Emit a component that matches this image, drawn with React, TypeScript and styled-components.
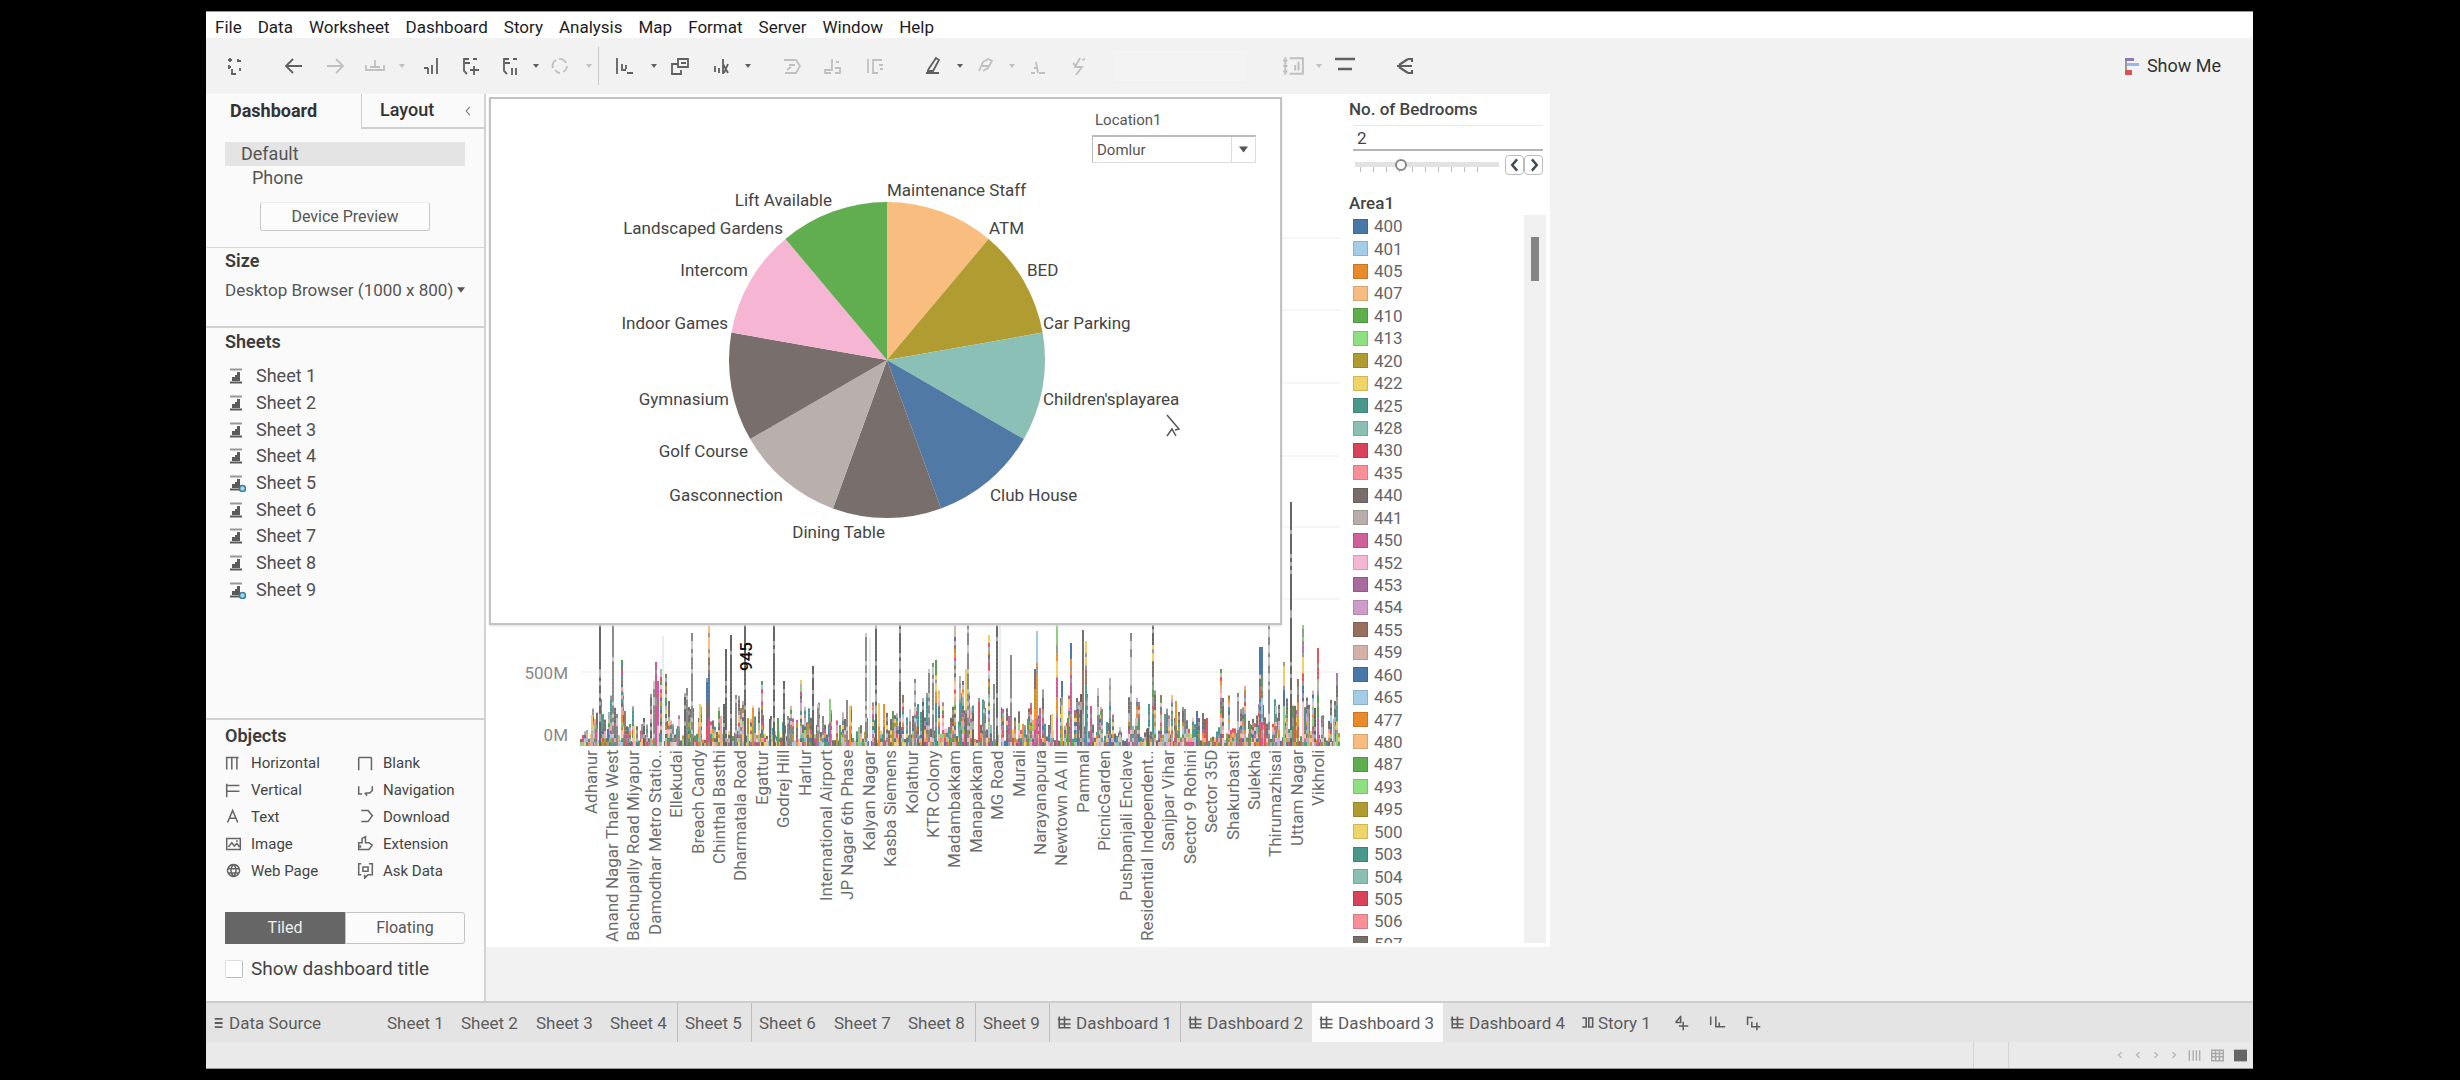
import React from "react";
import styled, { createGlobalStyle } from "styled-components";

const Global = createGlobalStyle`
  *, *::before, *::after { box-sizing: border-box; }
  body { margin: 0; background: #000; color: #333; font: 17px/22px Roboto, "Liberation Sans", sans-serif; }
  button, input, select { font: inherit; color: inherit; }
  button { border: 0; padding: 0; background: none; }
  ul { list-style: none; margin: 0; padding: 0; }
  h2 { margin: 0; }
  svg { display: block; }
`;

const Frame = styled.div`
  min-height: 100vh;
  padding: 11px 207px 11px 206px;
  display: flex;
`;
const Window = styled.div`
  flex: 1;
  min-width: 0;
  display: flex;
  flex-direction: column;
  background: #f2f2f2;
`;

/* Menu and toolbar */
const MenuBar = styled.nav`
  display: flex;
  gap: 16px;
  height: 27px;
  padding: 4px 9px 0;
  background: #fff;
  border-top: 1px solid #999;
  color: #1c1c24;
`;
const MenuItem = styled.button`
  height: 22px;
  line-height: 22px;
`;
const Toolbar = styled.div`
  display: flex;
  align-items: center;
  height: 56px;
  padding: 0 32px 0 9px;
`;
const Tool = styled.button<{ $w: number; $dim?: boolean }>`
  flex: 0 0 ${(p) => p.$w}px;
  height: 36px;
  display: flex;
  align-items: center;
  justify-content: center;
  color: ${(p) => (p.$dim ? "#c0c0c0" : "#606060")};
`;
const Gap = styled.span<{ $w: number }>`
  flex: 0 0 ${(p) => p.$w}px;
`;
const Rule = styled.span`
  flex: 0 0 1px;
  height: 38px;
  background: #c9c9c9;
`;
const FitBox = styled.select`
  width: 130px;
  height: 30px;
  border: 1px solid #f6f6f6;
  background: #f3f3f3;
  appearance: none;
`;
const ShowMe = styled.button`
  display: flex;
  align-items: center;
  gap: 8px;
  margin-left: auto;
  font-size: 18px;
`;

/* Side pane */
const Body = styled.div`
  flex: 1;
  display: flex;
  min-height: 0;
`;
const Side = styled.aside`
  flex: 0 0 280px;
  display: flex;
  flex-direction: column;
  background: #fafafa;
  border-right: 2px solid #d2d2d2;
`;
const PaneTabs = styled.div`
  display: flex;
  height: 35px;
`;
const PaneTab = styled.button<{ $on?: boolean }>`
  flex: ${(p) => (p.$on ? "0 0 155px" : "1")};
  padding: 0 0 2px ${(p) => (p.$on ? 24 : 18)}px;
  text-align: left;
  font-size: 18px;
  font-weight: ${(p) => (p.$on ? 700 : 500)};
  border: solid #cfcfcf;
  border-width: ${(p) => (p.$on ? "0" : "0 0 2px 1px")};
`;
const Collapse = styled.button`
  width: 22px;
  border-bottom: 2px solid #cfcfcf;
  color: #777;
`;
const Devices = styled.section`
  display: flex;
  flex-direction: column;
  height: 118px;
  padding: 13px 19px 0;
`;
const Device = styled.button<{ $on?: boolean }>`
  height: 24px;
  padding-left: ${(p) => (p.$on ? 16 : 27)}px;
  text-align: left;
  font-size: 18px;
  color: #555;
  background: ${(p) => (p.$on ? "#e4e4e4" : "none")};
`;
const Preview = styled.button`
  align-self: center;
  width: 170px;
  height: 29px;
  margin-top: 12px;
  font-size: 16px;
  color: #555;
  background: #fcfcfc;
  border: 1px solid #c8c8c8;
  border-top-color: #eee;
  border-radius: 3px;
`;
const SizeBox = styled.section`
  height: 79px;
  padding: 1px 19px;
  border-top: 1px solid #d8d8d8;
`;
const Heading = styled.h2`
  font-size: 18px;
  line-height: 24px;
  font-weight: 600;
  color: #3c3c3c;
`;
const SizePick = styled.button`
  display: flex;
  align-items: center;
  justify-content: space-between;
  width: 240px;
  margin-top: 5px;
  font-size: 17px;
  line-height: 24px;
  white-space: nowrap;
  color: #555;
`;
const Sheets = styled.section`
  flex: 1;
  padding: 2px 19px;
  border-top: 2px solid #d2d2d2;
`;
const SheetList = styled.ul`
  display: grid;
  grid-auto-rows: 1fr;
  height: 240px;
  margin-top: 9px;
`;
const SheetRow = styled.li`
  display: flex;
  align-items: center;
  gap: 10px;
  padding-left: 4px;
  font-size: 18px;
  color: #505050;
`;
const Objects = styled.section`
  height: 283px;
  padding: 4px 19px 0;
  border-top: 2px solid #d2d2d2;
`;
const ObjectGrid = styled.ul`
  display: grid;
  grid-template-columns: 132px 1fr;
  grid-auto-rows: 1fr;
  height: 134px;
  margin-top: 2px;
`;
const ObjectItem = styled.li`
  display: flex;
  align-items: center;
  gap: 9px;
  font-size: 15px;
  color: #444;
  svg { flex: 0 0 17px; color: #666; }
`;
const Segments = styled.div`
  display: grid;
  grid-template-columns: 1fr 1fr;
  height: 32px;
  margin-top: 28px;
`;
const Segment = styled.button<{ $on?: boolean }>`
  font-size: 16px;
  color: ${(p) => (p.$on ? "#eee" : "#555")};
  background: ${(p) => (p.$on ? "#666" : "#fbfbfb")};
  border: 1px solid ${(p) => (p.$on ? "#666" : "#c4c4c4")};
  border-radius: ${(p) => (p.$on ? "0" : "0 3px 3px 0")};
`;
const TitleCheck = styled.label`
  display: flex;
  align-items: center;
  gap: 8px;
  margin-top: 12px;
  font-size: 19px;
  line-height: 26px;
  color: #444;
  input {
    appearance: none;
    width: 18px;
    height: 18px;
    margin: 0;
    background: #fff;
    border: 1px solid #ddd;
    border-right-color: #bbb;
    border-bottom-color: #bbb;
    border-radius: 2px;
  }
`;

/* Dashboard canvas */
const Canvas = styled.main`
  position: relative;
  flex: 0 1 1064px;
  align-self: flex-start;
  display: grid;
  grid-template-columns: 1fr 201px;
  height: 853px;
  background: #fff;
`;
const Chart = styled.section`
  display: grid;
  grid-template-columns: 94px 1fr;
  grid-template-rows: 652px 1fr;
  min-width: 0;
`;
const YAxis = styled.div`
  display: flex;
  flex-direction: column;
  justify-content: flex-end;
  gap: 40px;
  padding-right: 12px;
  text-align: right;
  color: #888;
`;
const XAxis = styled.ul`
  grid-column: 2;
  display: grid;
  grid-template-columns: repeat(35, minmax(0, 1fr));
  width: 749px;
  padding-top: 4px;
`;
const Tick = styled.li`
  writing-mode: vertical-rl;
  transform: rotate(180deg);
  justify-self: center;
  justify-content: end;
  display: flex;
  height: 192px;
  line-height: 20px;
  white-space: nowrap;
  color: #6d6d6d;
`;
const Floating = styled.section`
  position: absolute;
  left: 3px;
  top: 3px;
  width: 793px;
  height: 528px;
  background: #fff;
  border: 2px solid #c2c2c2;
  box-shadow: 0 1px 2px #ddd;
`;
const Filter = styled.div`
  position: absolute;
  right: 24px;
  top: 10px;
  width: 164px;
  font-size: 15px;
  color: #555;
  label { display: block; padding-left: 3px; line-height: 22px; }
`;
const SelectWrap = styled.div`
  display: flex;
  height: 28px;
  margin-top: 4px;
  border: 1px solid #ddd;
  border-top: 2px solid #bbb;
  border-left-color: #bbb;
  select { flex: 1; padding: 0 4px; border: 0; background: #fff; appearance: none; }
  span { width: 24px; border-left: 1px solid #ddd; display: grid; place-items: center; }
`;
const SideCards = styled.section`
  display: flex;
  flex-direction: column;
  padding-right: 4px;
  color: #444;
`;
const CardTitle = styled.label`
  padding-top: 3px;
  font-size: 17px;
  line-height: 24px;
  font-weight: 500;
`;
const ValueBox = styled.input`
  height: 26px;
  margin: 4px 3px 0 4px;
  padding: 0 4px;
  min-width: 0;
  border: 0;
  border-top: 1px solid #e8e8e8;
  border-bottom: 2px solid #b4b4b4;
`;
const SliderRow = styled.div`
  display: flex;
  align-items: center;
  height: 22px;
  margin: 3px 3px 12px 6px;
`;
const Slider = styled.input`
  flex: 1;
  min-width: 0;
  height: 22px;
  margin: 0 6px 0 0;
  appearance: none;
  background:
    linear-gradient(#e2e2e2, #e2e2e2) 0 8px / 100% 5px no-repeat,
    repeating-linear-gradient(90deg, transparent 0 5px, #bbb 5px 6px, transparent 6px 13px) 0 13px / 135px 5px no-repeat;
  &::-webkit-slider-thumb {
    appearance: none;
    width: 12px;
    height: 12px;
    margin-top: -1px;
    background: #fff;
    border: 2px solid #888;
    border-radius: 50%;
  }
`;
const Step = styled.button`
  display: grid;
  place-items: center;
  width: 19px;
  height: 20px;
  border: 1px solid #bbb;
  border-radius: 4px;
  color: #3f4a55;
`;
const Legend = styled.div`
  display: flex;
  justify-content: space-between;
  height: 728px;
  overflow: hidden;
`;
const LegendList = styled.ul`
  display: grid;
  grid-auto-rows: 1fr;
  height: 740px;
  padding-left: 4px;
`;
const LegendItem = styled.li`
  display: flex;
  align-items: center;
  gap: 6px;
  color: #666;
`;
const Swatch = styled.span<{ $c: string }>`
  width: 15px;
  height: 15px;
  background: ${(p) => p.$c};
  border: 1px solid #0002;
`;
const ScrollTrack = styled.div`
  width: 22px;
  padding: 22px 7px;
  background: #f0f0f0;
  &::before { content: ""; display: block; height: 44px; background: #858585; }
`;

/* Bottom strips */
const TabBar = styled.nav`
  display: flex;
  height: 41px;
  background: #e4e4e4;
  border-top: 2px solid #cdcdcd;
`;
const Tab = styled.button<{ $w: number; $on?: boolean; $line?: boolean }>`
  flex: 0 0 ${(p) => p.$w}px;
  display: flex;
  align-items: center;
  gap: 4px;
  padding-left: 7px;
  white-space: nowrap;
  color: #5c5c5c;
  background: ${(p) => (p.$on ? "#fcfcfc" : "none")};
  border-right: 1px solid ${(p) => (p.$line ? "#bcbcbc" : "transparent")};
`;
const Status = styled.footer`
  display: flex;
  align-items: center;
  justify-content: flex-end;
  gap: 10px;
  height: 27px;
  padding-right: 6px;
  background: #eaeaea;
  border-bottom: 1px solid #999;
  color: #aaa;
`;
const StatusCell = styled.span`
  align-self: stretch;
  width: 36px;
  margin-right: 97px;
  border: solid #d4d4d4;
  border-width: 0 1px;
`;
const StatusOn = styled.span`
  color: #666;
`;
const Pager = styled.button`
  width: 8px;
  color: #b4b4b4;
`;

const P = ["#4e79a7", "#a0cbe8", "#f28e2b", "#ffbe7d", "#59a14f", "#8cd17d", "#b6992d", "#f1ce63", "#499894", "#86bcb6", "#e15759", "#ff9d9a", "#79706e", "#bab0ac", "#d3579a", "#fabfd2", "#b07aa1", "#d4a6c8", "#9d7660", "#d7b5a6"];
const LC = ["#4878a8", "#a3cce6", "#e98a2b", "#f8bc80", "#5eae4e", "#8fe07f", "#b09b30", "#efd468", "#48998c", "#8bbfb3", "#d9435a", "#f98f98", "#776d6b", "#b8adab", "#cf6099", "#f5b6d4", "#a86a9f", "#cd9cc8", "#98705c", "#d3b1a6"];

const Svg = ({ d, w = 20, s = 1.8, fill }: { d: string; w?: number; s?: number; fill?: boolean }) => (
  <svg width={w} height={w} viewBox="0 0 20 20" fill={fill ? "currentColor" : "none"} stroke={fill ? "none" : "currentColor"} strokeWidth={s} aria-hidden="true">
    <path d={d} />
  </svg>
);
const Caret = ({ size = 6 }: { size?: number }) => (
  <svg width={size} height={size} viewBox="0 0 6 6" fill="currentColor" aria-hidden="true"><path d="M0 1h6L3 5z" /></svg>
);

type ToolDef = [string, number, string | null, boolean?];
const TOOLS: ToolDef[] = [
  ["Start page", 40, "M5 2v4M3 4h4M13 3v3M12 5h4M4 9v4M3 11h3M7 13v5h4M15 12v3"],
  ["", 19, null],
  ["Undo", 40, "M18 10H3M9 3l-7 7 7 7"],
  ["Redo", 42, "M2 10h15M11 3l7 7-7 7", true],
  ["Save", 38, "M1 9v5h18V9M10 4v8M5 11h10", true],
  ["Save options", 16, "caret", true],
  ["New data source", 40, "M17 2v16M12 9v9M8 12v6M4 12h4"],
  ["New worksheet", 40, "M9 3H4v12l3 3M5 7h5M13 3h4M14 10v9M10 14h9"],
  ["Duplicate", 40, "M9 3H4v12l3 3M5 7h5M13 3h4M12 12v7M16 12v7"],
  ["Duplicate options", 11, "caret"],
  ["Refresh", 38, "M3 12a7 7 0 0 1 3-8M9 3a7 7 0 0 1 7 4M17 10a7 7 0 0 1-4 6M10 17a7 7 0 0 1-5-3", true],
  ["Refresh options", 19, "caret", true],
  ["", 4, "rule"],
  ["Swap", 50, "M3 2v16M8 8v7M9 14h3M13 17h6M12 9v4"],
  ["Swap options", 10, "caret"],
  ["Sort", 41, "M8 8H2v10h9v-4M8 12V3h10v8H8M11 7h5"],
  ["Labels", 43, "M3 10v6M7 12v5M11 3v15M11 8l5 9M16 8l-4 9"],
  ["Labels options", 10, "caret"],
  ["", 20, null],
  ["Group", 38, "M2 4h12l4 6-4 7H3M7 9h6M5 14l4-3", true],
  ["Pin", 44, "M9 3v11H2v3h6M12 12h5v5h-5M13 6h3", true],
  ["Fit axis", 40, "M3 3v14M8 3v14h5M8 4h9M14 9h4M15 13h3", true],
  ["", 16, null],
  ["Highlight", 44, "M3 17h13M5 14l8-12 3 2-6 11H4"],
  ["Highlight options", 10, "caret"],
  ["Annotate", 42, "M3 15l4-9 5-3 4 2-4 7-5 3M6 10h7", true],
  ["Annotate options", 10, "caret", true],
  ["Text label", 40, "M9 6l2 11M4 17h4M12 17h6M7 12h4", true],
  ["Fix", 42, "M12 2l-5 9h7l-6 8M5 7l3 3M14 4l3-1", true],
];

const SheetIcon = ({ used }: { used?: boolean }) => (
  <svg width="17" height="18" viewBox="0 0 17 18" aria-hidden="true">
    <path d="M1 2.500h12" stroke="#999" strokeWidth="2" />
    <path d="M1 15.500h12" stroke="#5a5a5a" strokeWidth="2" />
    <path d="M3 14v-4h3V8h2V5h3v9z" fill="#5a5a5a" />
    {used && <circle cx="13.500" cy="14.500" r="3" fill="#a9d3e6" stroke="#2f7f9f" strokeWidth="1.500" />}
  </svg>
);
const GridIcon = () => <Svg w={15} d="M3 2v16M10 2v16M1 6h17M3 12h15M4 17h14" s={2.2} />;

const OBJECTS: [string, string][] = [
  ["Horizontal", "M2 2v15M8 3v14M14 3v14M2 3h14"],
  ["Blank", "M2 3v15M17 3v15M2 3h15"],
  ["Vertical", "M2 2v16M2 4h15M2 11h15"],
  ["Navigation", "M2 5v9h4M10 13h5l3-3V5M9 13l3 3"],
  ["Text", "M3 17L9 3l6 14M5 12h8"],
  ["Download", "M5 3h8l5 6-5 7H5"],
  ["Image", "M2 4h16v13H2zM4 14l4-5 3 4 3-3 3 4M13 7h2"],
  ["Extension", "M2 9h4V4l4-2v7h4l4 3-4 5H2zM4 12v3"],
  ["Web Page", "M10 3a7 7 0 1 0 .1 0M4 8h13M4 13h13M10 3c-4 4-4 10 0 14M10 3c4 4 4 10 0 14"],
  ["Ask Data", "M5 2H2v13h3M14 2h4v13h-5l-4 4v-4M7 6h6v5H7z"],
];

const SLICES = ["#f9bd80", "#b09c31", "#8bc0b6", "#5079a5", "#786e6b", "#b9afac", "#786e6b", "#f6b5d3", "#60ae50"];
const PIE_LABELS: [string, number, number, ("start" | "end")?][] = [
  ["Maintenance Staff", 396, 97], ["ATM", 498, 135], ["BED", 536, 177], ["Car Parking", 552, 230],
  ["Children'splayarea", 552, 306], ["Club House", 499, 402], ["Dining Table", 394, 439, "end"],
  ["Gasconnection", 292, 402, "end"], ["Golf Course", 257, 358, "end"], ["Gymnasium", 238, 306, "end"],
  ["Indoor Games", 237, 230, "end"], ["Intercom", 257, 177, "end"], ["Landscaped Gardens", 292, 135, "end"],
  ["Lift Available", 341, 107, "end"],
];
const Pie = () => {
  const cx = 396, cy = 261, r = 158;
  const pt = (deg: number) => {
    const a = (deg * Math.PI) / 180;
    return `${cx + r * Math.sin(a)} ${cy - r * Math.cos(a)}`;
  };
  return (
    <svg width="100%" height="100%" viewBox="0 0 789 524" role="img" aria-label="Amenities">
      {SLICES.map((c, i) => (
        <path key={i} fill={c} d={`M${cx} ${cy}L${pt(i * 40)}A${r} ${r} 0 0 1 ${pt(i * 40 + 40)}Z`} />
      ))}
      {PIE_LABELS.map(([t, x, y, a]) => (
        <text key={t} x={x} y={y} textAnchor={a || "start"} fontSize="17" fill="#444">{t}</text>
      ))}
      <path d="M676 316l12 14-4 1M676 337l5-7 4 7" fill="none" stroke="#555" strokeWidth="1.5" />
    </svg>
  );
};

/* x, top and colour runs of a stacked bar, top to bottom: g grey, l light grey, x pale, m mixed, or palette indexes. */
type Bar = [number, number, string];
const BARS: Bar[] = [
  [93, 730, "l"], [106, 714, "7,13"], [110, 728, "14"], [114, 624, "g"], [122, 728, "0"], [127, 624, "l"], [131, 713, "l"], [136, 659, "m"], [139, 710, "18"],
  [144, 723, "m"], [148, 725, "7"], [156, 723, "18,3"], [158, 717, "g"], [165, 718, "g"], [168, 680, "l"], [170, 661, "14"], [172, 680, "14,14,15"], [175, 668, "m"], [177, 635, "x"],
  [180, 673, "m"], [187, 725, "l"], [192, 725, "l"], [199, 692, "g"], [201, 687, "l"], [206, 632, "l"], [214, 703, "7,13"], [221, 677, "0,12,10"],
  [223, 624, "3,3,18,0,0,12,14,14"], [235, 715, "11"], [238, 703, "g"], [240, 648, "g"], [245, 634, "g"], [250, 694, "l"], [255, 707, "l"], [259, 624, "g"], [262, 717, "6,5"],
  [267, 707, "2,6"], [276, 680, "m"], [284, 718, "g"], [288, 624, "g"], [292, 717, "4"], [298, 680, "g"], [302, 715, "l"], [305, 720, "l"], [315, 679, "m"],
  [322, 723, "6,12"], [327, 665, "g"], [332, 703, "l"], [337, 715, "l"], [344, 698, "5,14"], [354, 724, "4"], [361, 699, "l"], [364, 705, "7,2"], [373, 726, "5"],
  [380, 632, "l"], [384, 637, "x"], [390, 624, "g"], [393, 702, "7,2"], [398, 703, "2,18"], [407, 710, "4,6"], [414, 624, "g"], [424, 708, "l"], [429, 678, "l"],
  [432, 703, "8,12"], [437, 697, "g"], [443, 668, "l"], [447, 662, "l"], [450, 659, "4,7,2,8,8,8"], [464, 728, "4"], [469, 624, "m"], [474, 675, "13,8,8"], [477, 680, "m"],
  [480, 668, "7,12"], [482, 624, "l"], [487, 712, "g"], [493, 697, "10"], [498, 700, "l"], [503, 634, "m"], [508, 683, "l"], [511, 624, "g"], [514, 624, "x"],
  [525, 654, "l"], [523, 715, "14"], [537, 723, "2"], [542, 718, "4"], [549, 668, "12,6,2,14"], [551, 630, "1,2,2,14"], [554, 707, "14"], [566, 713, "7"],
  [571, 624, "5,2,7,14,2,14,14"], [576, 680, "0,7,2"], [582, 717, "4"], [585, 642, "0,2,14,14,14,14,14"], [592, 708, "12"], [595, 693, "g"], [597, 629, "12,18,13"],
  [600, 640, "7,18,8,8,8"], [605, 705, "14"], [612, 687, "l"], [616, 708, "l"], [624, 677, "13,8,0"], [634, 726, "l"], [645, 632, "l"], [650, 717, "l"], [662, 727, "g"],
  [667, 624, "g,7,12,4,10,8,8"], [679, 713, "l"], [686, 694, "m"], [690, 700, "2,18"], [699, 708, "l"], [711, 710, "0"], [721, 717, "10"], [735, 668, "m"], [752, 692, "l"],
  [759, 685, "m"], [764, 723, "4"], [774, 646, "0,m,0,10"], [776, 646, "0,4,1,14"], [783, 624, "l"], [779, 723, "10"], [790, 705, "l"], [798, 661, "7,0,5,5"], [805, 501, "g"],
  [807, 705, "4"], [812, 678, "18,2,10"], [817, 624, "5,16,7,10,0,15,15,15"], [822, 708, "13"], [829, 707, "g"], [832, 647, "10,10,13,4,4,14,14"], [836, 715, "l"],
  [851, 672, "16,12,8,8,7,5"], [848, 718, "13"],
];
const rnd = (n: number) => {
  const v = Math.sin(n * 91.7 + 13.3) * 43758.5;
  return v - Math.floor(v);
};
const colours = (code: string, seed: number, n: number) => {
  const parts = code.split(",");
  return Array.from({ length: n }, (_, i) => {
    const k = parts[Math.floor((i / n) * parts.length)];
    if (k === "g") return rnd(seed + i * 3) > 0.82 ? "#aaa" : "#666";
    if (k === "l") return rnd(seed + i * 3) > 0.75 ? "#c8c8c8" : "#8a8a8a";
    if (k === "x") return "#e4eeee";
    if (k === "m") return P[Math.floor(rnd(seed + i * 7) * 20)];
    return rnd(seed + i * 5) > 0.9 ? "#999" : P[Number(k)];
  });
};
const BarPlot = () => {
  const out: React.ReactNode[] = [];
  const stack = (x: number, top: number, code: string, w: number) => {
    const h = 745 - top, n = Math.max(1, Math.round(h / 4));
    colours(code, x, n).forEach((c, i) => out.push(<rect key={`${x}-${top}-${i}`} x={x - 94} y={top - 93 + (i * h) / n} width={w} height={h / n + 0.2} fill={c} />));
  };
  for (let x = 94; x < 853; x += 2) {
    const peak = BARS.reduce((m, b) => (Math.abs(b[0] - x) < 8 ? Math.max(m, 745 - b[1]) : m), 0);
    const h = 5 + Math.pow(rnd(x), 1.6) * (peak > 70 ? 52 : peak > 28 ? 36 : 18);
    stack(x, 745 - h, rnd(x + 5) > 0.6 ? "12,m,m" : rnd(x + 9) > 0.7 ? "8,m" : "m", 2);
  }
  BARS.forEach(([x, top, code]) => stack(x - 1, top, code, 2));
  return (
    <svg width="100%" height="652" viewBox="0 0 769 652" preserveAspectRatio="none" role="img" aria-label="Price by location">
      {[144, 216, 289, 362, 433, 505, 578].map((y) => <path key={y} d={`M0 ${y}H760`} stroke="#ededed" strokeWidth="1" />)}
      {out}
      <text transform="translate(172 577) rotate(-90)" fontSize="17" fontWeight="500" fill="#111">945</text>
    </svg>
  );
};

const PLACES = ["Adhanur", "Anand Nagar Thane West", "Bachupally Road Miyapur", "Damodhar Metro Statio..", "Ellekudai", "Breach Candy", "Chinthal Basthi", "Dharmatala Road", "Egattur", "Godrej Hill", "Harlur", "International Airport", "JP Nagar 6th Phase", "Kalyan Nagar", "Kasba Siemens", "Kolathur", "KTR Colony", "Madambakkam", "Manapakkam", "MG Road", "Murali", "Narayanapura", "Newtown AA III", "Pammal", "PicnicGarden", "Pushpanjali Enclave", "Residential Independent..", "Sanjpar Vihar", "Sector 9 Rohini", "Sector 35D", "Shakurbasti", "Sulekha", "Thirumazhisai", "Uttam Nagar", "Vikhroli"];
const AREAS = [400, 401, 405, 407, 410, 413, 420, 422, 425, 428, 430, 435, 440, 441, 450, 452, 453, 454, 455, 459, 460, 465, 477, 480, 487, 493, 495, 500, 503, 504, 505, 506, 507];

export default function App() {
  return (
    <>
      <Global />
      <Frame>
        <Window>
          <MenuBar>
            {["File", "Data", "Worksheet", "Dashboard", "Story", "Analysis", "Map", "Format", "Server", "Window", "Help"].map((m) => <MenuItem key={m}>{m}</MenuItem>)}
          </MenuBar>
          <Toolbar>
            {TOOLS.map(([name, w, d, dim], i) =>
              d === null ? <Gap key={i} $w={w} /> : d === "rule" ? <Rule key={i} /> : (
                <Tool key={i} $w={w} $dim={dim} aria-label={name}>{d === "caret" ? <Caret /> : <Svg d={d} />}</Tool>
              )
            )}
            <Gap $w={16} />
            <FitBox aria-label="Fit"><option></option></FitBox>
            <Gap $w={26} />
            <Tool $w={44} $dim aria-label="Cards"><Svg w={22} d="M3 2v16M1 5h4M1 10h4M1 15h4M7 3h12v14H7M12 14V9M15 14V6" /></Tool>
            <Tool $w={8} $dim aria-label="Cards options"><Caret /></Tool>
            <Tool $w={44} aria-label="Presentation"><Svg d="M0 3h20M3 13h14" s={2.6} /></Tool>
            <Gap $w={16} />
            <Tool $w={44} aria-label="Share"><Svg d="M4 9l9-6M4 11l9 6M2 10h15M13 3h4v3M13 17h4v-3" s={2.2} /></Tool>
            <ShowMe>
              <svg width="15" height="19" viewBox="0 0 15 19" aria-hidden="true">
                <path d="M1 1h9v3H1z" fill="#8d7bb5" /><path d="M1 6h14v3H1z" fill="#9db4e8" /><path d="M1 4h2v14H1z" fill="#999" /><path d="M1 13h7v5H1z" fill="#d9534f" />
              </svg>
              Show Me
            </ShowMe>
          </Toolbar>

          <Body>
            <Side>
              <PaneTabs>
                <PaneTab $on>Dashboard</PaneTab>
                <PaneTab>Layout</PaneTab>
                <Collapse aria-label="Collapse pane"><Svg w={12} d="M13 3L7 10l6 7" /></Collapse>
              </PaneTabs>
              <Devices>
                <Device $on>Default</Device>
                <Device>Phone</Device>
                <Preview>Device Preview</Preview>
              </Devices>
              <SizeBox>
                <Heading>Size</Heading>
                <SizePick>Desktop Browser (1000 x 800)<Caret size={8} /></SizePick>
              </SizeBox>
              <Sheets>
                <Heading>Sheets</Heading>
                <SheetList>
                  {[1, 2, 3, 4, 5, 6, 7, 8, 9].map((n) => <SheetRow key={n}><SheetIcon used={n === 5 || n === 9} />Sheet {n}</SheetRow>)}
                </SheetList>
              </Sheets>
              <Objects>
                <Heading>Objects</Heading>
                <ObjectGrid>
                  {OBJECTS.map(([t, d]) => <ObjectItem key={t}><Svg w={17} d={d} />{t}</ObjectItem>)}
                </ObjectGrid>
                <Segments>
                  <Segment $on>Tiled</Segment>
                  <Segment>Floating</Segment>
                </Segments>
                <TitleCheck><input type="checkbox" />Show dashboard title</TitleCheck>
              </Objects>
            </Side>

            <Canvas>
              <Chart>
                <YAxis><span>500M</span><span>0M</span></YAxis>
                <BarPlot />
                <XAxis>{PLACES.map((p) => <Tick key={p}>{p}</Tick>)}</XAxis>
              </Chart>
              <SideCards>
                <CardTitle htmlFor="bedrooms">No. of Bedrooms</CardTitle>
                <ValueBox id="bedrooms" defaultValue="2" />
                <SliderRow>
                  <Slider type="range" min={0} max={10} defaultValue={3} aria-label="Bedrooms" />
                  <Step aria-label="Previous"><Svg w={14} s={3.5} d="M13 2L6 10l7 8" /></Step>
                  <Step aria-label="Next"><Svg w={14} s={3.5} d="M7 2l7 8-7 8" /></Step>
                </SliderRow>
                <CardTitle as="h2">Area1</CardTitle>
                <Legend>
                  <LegendList>
                    {AREAS.map((a, i) => <LegendItem key={a}><Swatch $c={LC[i % 20]} />{a}</LegendItem>)}
                  </LegendList>
                  <ScrollTrack />
                </Legend>
              </SideCards>
              <Floating>
                <Pie />
                <Filter>
                  <label htmlFor="loc">Location1</label>
                  <SelectWrap>
                    <select id="loc"><option>Domlur</option></select>
                    <span><Caret size={9} /></span>
                  </SelectWrap>
                </Filter>
              </Floating>
            </Canvas>
          </Body>

          <TabBar>
            <Tab $w={174}><Svg w={12} d="M3 3h13M3 10h13M3 17h13" s={3} />Data Source</Tab>
            {[1, 2, 3, 4, 5, 6, 7, 8, 9].map((n) => <Tab key={n} $w={n % 2 ? 74 : 75} $line={[4, 5, 8, 9].includes(n)}>Sheet {n}</Tab>)}
            {[1, 2, 3, 4].map((n) => <Tab key={n} $w={131} $on={n === 3} $line={n < 2}><GridIcon />Dashboard {n}</Tab>)}
            <Tab $w={92}><Svg w={13} d="M2 3h6v14H2M12 3h6v14h-6z" s={2.4} />Story 1</Tab>
            <Tab $w={36} aria-label="New worksheet"><Svg w={17} d="M9 2v8H3M9 3L3 10M12 9v10M7 14h11" /></Tab>
            <Tab $w={36} aria-label="New dashboard"><Svg w={17} d="M2 3v10M8 3v12h11M12 10v5" /></Tab>
            <Tab $w={36} aria-label="New story"><Svg w={17} d="M3 3v10M3 4h6M8 9v6h10M14 10v9" /></Tab>
          </TabBar>
          <Status>
            <StatusCell />
            {["First", "Previous", "Next", "Last"].map((n, i) => <Pager key={n} aria-label={n}><Svg w={8} d={i < 2 ? "M14 3L6 10l8 7" : "M6 3l8 7-8 7"} s={3} /></Pager>)}
            <Svg w={13} d="M2 2v16M8 2v16M13 2v16M18 2v16" s={2} />
            <Svg w={13} d="M1 2h18v16H1zM1 7h18M1 12h18M7 2v16M13 2v16" s={2.4} />
            <StatusOn><Svg w={13} fill d="M0 1h20v18H0z" /></StatusOn>
          </Status>
        </Window>
      </Frame>
    </>
  );
}
